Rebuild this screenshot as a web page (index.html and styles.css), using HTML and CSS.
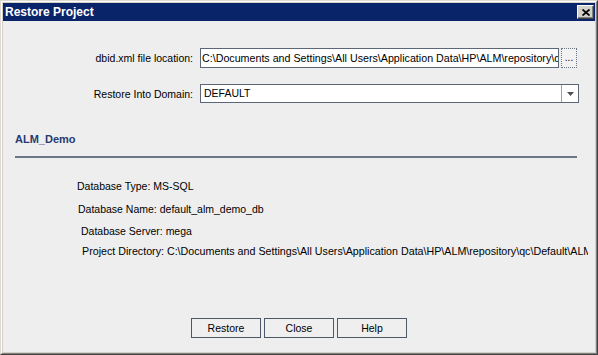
FILE: index.html
```html
<!DOCTYPE html>
<html lang="en">
<head>
    <meta charset="UTF-8">
    <title>Restore Project</title>
    <link rel="stylesheet" href="styles.css">
</head>
<body>
    <div class="window">
        <div class="frame">
            <div class="titlebar">
                <span class="title">Restore Project</span>
                <button class="close-btn" aria-label="Close">
                    <svg width="8" height="7" viewBox="0 0 8 7">
                        <path d="M0.5 0.5 L7.5 6.5 M7.5 0.5 L0.5 6.5" stroke="#000" stroke-width="1.7" fill="none"/>
                    </svg>
                </button>
            </div>

            <div class="content">
                <div class="form">
                    <label class="form-label">dbid.xml file location:</label>
                    <div class="field-group">
                        <div class="file-input">C:\Documents and Settings\All Users\Application Data\HP\ALM\repository\qc\Default</div>
                        <button class="browse-btn">...</button>
                    </div>

                    <label class="form-label">Restore Into Domain:</label>
                    <div class="select">
                        <span class="select-value">DEFAULT</span>
                        <span class="select-arrow">
                            <svg width="7" height="4" viewBox="0 0 7 4"><path d="M0 0 H7 L3.5 4 Z" fill="#4a4f58"/></svg>
                        </span>
                    </div>
                </div>

                <div class="section-title">ALM_Demo</div>
                <div class="separator"></div>

                <div class="info">
                    <div class="info-row row-1">Database Type: MS-SQL</div>
                    <div class="info-row row-2">Database Name: default_alm_demo_db</div>
                    <div class="info-row row-3">Database Server: mega</div>
                    <div class="info-row row-4">Project Directory: C:\Documents and Settings\All Users\Application Data\HP\ALM\repository\qc\Default\ALM_Demo</div>
                </div>

                <div class="buttons">
                    <button class="dlg-btn">Restore</button>
                    <button class="dlg-btn">Close</button>
                    <button class="dlg-btn">Help</button>
                </div>
            </div>
        </div>
    </div>
</body>
</html>
```

FILE: styles.css
```css
* {
    box-sizing: border-box;
}

body {
    margin: 0;
    font-family: "Liberation Sans", Arial, sans-serif;
    font-size: 10.5px;
    color: #000;
    background: #eeeeee;
}

.window {
    width: 598px;
    height: 355px;
    display: flex;
    border: 1px solid;
    border-color: #dcd9d2 #404040 #404040 #dcd9d2;
    overflow: hidden;
}

.frame {
    flex: 1;
    min-width: 0;
    display: flex;
    flex-direction: column;
    padding: 1px;
    background: #d4d0c8;
    border: 1px solid;
    border-color: #ffffff #808080 #808080 #ffffff;
}

.titlebar {
    height: 18px;
    flex-shrink: 0;
    background: #0a246a;
    display: flex;
    align-items: center;
    justify-content: space-between;
    padding: 0 1px 0 2px;
}

.title {
    color: #fff;
    font-weight: bold;
    font-size: 12px;
}

.close-btn {
    width: 17px;
    height: 14px;
    padding: 0;
    display: flex;
    align-items: center;
    justify-content: center;
    background: #d4d0c8;
    border: 1px solid;
    border-color: #ffffff #404040 #404040 #ffffff;
    box-shadow: inset -1px -1px 0 #808080;
}

.content {
    flex: 1;
    min-width: 0;
    display: flex;
    flex-direction: column;
    background: #eeeeee;
}

.form {
    display: grid;
    grid-template-columns: 190px 1fr;
    column-gap: 7px;
    row-gap: 16px;
    margin-top: 27px;
}

.form-label {
    align-self: center;
    text-align: right;
}

.field-group {
    display: flex;
    gap: 2px;
}

.file-input {
    width: 359px;
    height: 20px;
    line-height: 18px;
    padding-left: 1px;
    font-size: 10.7px;
    background: #fff;
    border: 1px solid #5b6776;
    white-space: nowrap;
    overflow: hidden;
}

.browse-btn {
    width: 16px;
    height: 20px;
    padding: 0;
    font-family: inherit;
    font-size: 10px;
    line-height: 16px;
    background: #f2f2f2;
    border: 1px dotted #6a7482;
    overflow: hidden;
}

.select {
    width: 379px;
    height: 19px;
    display: flex;
    background: #fff;
    border: 1px solid #5b6776;
}

.select-value {
    flex: 1;
    line-height: 17px;
    padding-left: 3px;
}

.select-arrow {
    width: 17px;
    display: flex;
    align-items: center;
    justify-content: center;
    border-left: 1px solid #9aa2ad;
}

.section-title {
    margin-top: 29px;
    padding-left: 12px;
    font-size: 11px;
    line-height: 14px;
    font-weight: bold;
    color: #263a72;
}

.separator {
    height: 2px;
    margin: 10px 18px 0 12px;
    background: #6d7687;
}

.info {
    margin: 21px 7px 0 0;
    min-width: 0;
    overflow: hidden;
}

.info-row {
    line-height: 14px;
    white-space: nowrap;
}

.row-1 { padding-left: 74px; }
.row-2 { padding-left: 75px; margin-top: 9px; }
.row-3 { padding-left: 78px; margin-top: 8px; }
.row-4 { padding-left: 79px; margin-top: 6px; font-size: 10.7px; }

.buttons {
    margin-top: auto;
    margin-bottom: 14px;
    display: flex;
    justify-content: center;
    gap: 3px;
}

.dlg-btn {
    width: 70px;
    height: 20px;
    padding: 0;
    font-family: inherit;
    font-size: 10.5px;
    color: #000;
    background: #efefef;
    border: 1px solid #4c5866;
}
```
